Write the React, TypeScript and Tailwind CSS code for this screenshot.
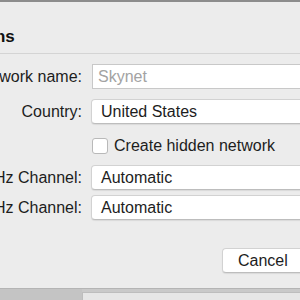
const Popup = ({ value }: { value: string }) => (
  <div className="h-[25px] w-[240px] rounded-[4px] border border-[#d2d2d2] border-b-[#bdbdbd] bg-white shadow-[0_1px_1px_rgba(0,0,0,0.08)] pl-[9px] flex items-center text-[16px] text-[#1d1d1d]">
    {value}
  </div>
);

const Label = ({ text }: { text: string }) => (
  <div className="flex items-center justify-end whitespace-nowrap text-[16px] text-[#1d1d1d]">{text}</div>
);

export default function App() {
  return (
    <div className="w-[300px] h-[300px] overflow-hidden bg-[#c9c9c9] font-['Liberation_Sans',Arial,sans-serif]">
      {/* dialog sheet, partly off screen */}
      <div className="ml-[-130px] w-[470px] h-[289px] bg-[#ececec] border-t-2 border-[#8c8c8c] border-b border-b-[#b4b4b4] flex flex-col">
        <div className="h-[51px] pt-[26px] pl-[6px] text-[17px] leading-[18px] font-bold text-[#111]">Wireless Options</div>
        <div className="h-px bg-[#d4d4d4]" />

        <div className="grid grid-cols-[212px_1fr] gap-x-[10px] mt-[10px]">
          <Label text="5 GHz Network name:" />
          <div className="h-[25px] border border-[#c8c8c8] bg-white pl-[5px] flex items-center text-[16px] text-[#a3a3a3]">
            Skynet
          </div>

          <div className="col-span-2 h-[10px]" />
          <Label text="Country:" />
          <div className="-ml-px">
            <Popup value="United States" />
          </div>

          <div className="col-span-2 h-[14px]" />
          <div />
          <div className="flex items-center gap-[6px] h-[16px]">
            <div className="w-[16px] h-[16px] rounded-[3px] border border-[#b9b9b9] bg-white" />
            <span className="text-[16px] text-[#1d1d1d] leading-none">Create hidden network</span>
          </div>

          <div className="col-span-2 h-[11px]" />
          <Label text="2.4 GHz Channel:" />
          <div className="-ml-px">
            <Popup value="Automatic" />
          </div>

          <div className="col-span-2 h-[5px]" />
          <Label text="5 GHz Channel:" />
          <div className="-ml-px">
            <Popup value="Automatic" />
          </div>
        </div>

        <div className="flex pl-[352px] mt-[28px]">
          <button className="h-[25px] w-[90px] rounded-[4px] border border-[#d2d2d2] border-b-[#bdbdbd] bg-white shadow-[0_1px_1px_rgba(0,0,0,0.08)] pl-[15px] text-left text-[16px] text-[#1d1d1d]">
            Cancel
          </button>
        </div>
      </div>
      <div className="flex h-[11px]">
        <div className="w-[82px] bg-[#c4c4c4]" />
        <div className="flex-1 mt-[3px] bg-[#e6e6e6] border-l border-t border-[#bdbdbd]" />
      </div>
    </div>
  );
}
